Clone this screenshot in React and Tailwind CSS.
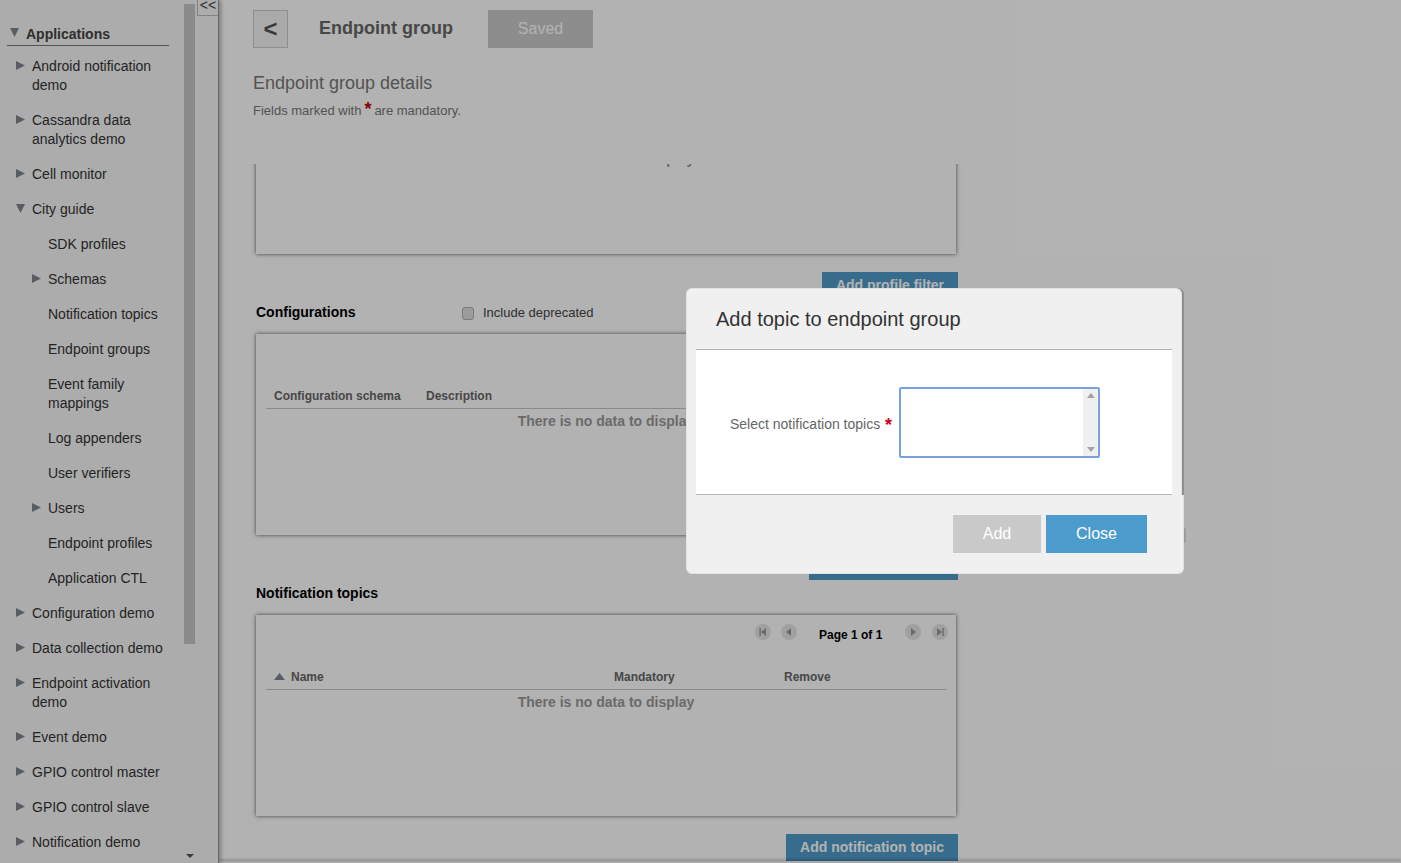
const items = [
  { t: "Android notification demo", l: 1, a: "r" },
  { t: "Cassandra data analytics demo", l: 1, a: "r" },
  { t: "Cell monitor", l: 1, a: "r" },
  { t: "City guide", l: 1, a: "d" },
  { t: "SDK profiles", l: 2 },
  { t: "Schemas", l: 2, a: "r" },
  { t: "Notification topics", l: 2 },
  { t: "Endpoint groups", l: 2 },
  { t: "Event family mappings", l: 2 },
  { t: "Log appenders", l: 2 },
  { t: "User verifiers", l: 2 },
  { t: "Users", l: 2, a: "r" },
  { t: "Endpoint profiles", l: 2 },
  { t: "Application CTL", l: 2 },
  { t: "Configuration demo", l: 1, a: "r" },
  { t: "Data collection demo", l: 1, a: "r" },
  { t: "Endpoint activation demo", l: 1, a: "r" },
  { t: "Event demo", l: 1, a: "r" },
  { t: "GPIO control master", l: 1, a: "r" },
  { t: "GPIO control slave", l: 1, a: "r" },
  { t: "Notification demo", l: 1, a: "r" },
];

function Tri({ dir, className }) {
  return (
    <svg viewBox="0 0 9 9" className={"block h-[9px] w-[9px] " + (className || "")} fill="#7f858e">
      {dir === "d" ? <path d="M0 0H9L4.5 9Z" /> : <path d="M0 0L9 4.5L0 9Z" />}
    </svg>
  );
}

function Row({ item }) {
  return (
    <div className={"flex pb-4 pr-2 text-[14px] leading-[19px] text-[#333] " + (item.l === 2 ? "pl-[32px]" : "pl-4")}>
      <div className="w-4 shrink-0 pt-[2px]">{item.a && <Tri dir={item.a} className="mt-[2px]" />}</div>
      <div>{item.t}</div>
    </div>
  );
}

function Sidebar() {
  return (
    <aside className="relative z-10 flex h-full w-[219px] shrink-0 overflow-hidden border-r border-[#999] bg-[#f7f7f7] shadow-[2px_0_4px_rgba(0,0,0,0.3)]">
      <div className="w-[184px] shrink-0">
        <div className="ml-[7px] mt-[24px] flex h-[22px] w-[162px] border-b border-[#777] text-[14px] font-bold leading-[19px] text-[#444]">
          <Tri dir="d" className="ml-[3px] mt-[4px]" />
          <span className="ml-[7px] mt-[1px]">Applications</span>
        </div>
        <div className="mt-[11px]">
          {items.map((it) => (
            <Row key={it.t} item={it} />
          ))}
        </div>
      </div>
      <div className="relative w-3 shrink-0">
        <div className="mt-1 h-[640px] w-[11px] bg-[#c6c6c6]" />
        <svg viewBox="0 0 8 4" className="absolute bottom-[5px] left-[2px] h-1 w-2" fill="#555">
          <path d="M0 0H8L4 4Z" />
        </svg>
      </div>
      <div className="flex-1">
        <div className="ml-[1px] flex h-4 items-center justify-center border-b border-l border-[#bbb] text-[14px] leading-none text-[#444]">
          <span className="-mt-[5px]">&lt;&lt;</span>
        </div>
      </div>
    </aside>
  );
}

function Pager() {
  const Btn = ({ d, bar, right }) => (
    <div className="flex h-4 w-4 items-center justify-center rounded-full bg-[#e6e6e6]">
      <svg viewBox="0 0 8 8" className="h-2 w-2" fill="#999">
        <path d={d} />
        {bar && <rect x={right ? 6.4 : 0.4} y="0" width="1.4" height="8" />}
      </svg>
    </div>
  );
  return (
    <div className="flex justify-end pr-[8px] pt-[9px]">
      <div className="flex items-start">
        <Btn d="M7 0V8L2 4Z" bar />
        <div className="w-[10px]" />
        <Btn d="M6 0V8L1 4Z" />
        <div className="w-[22px] whitespace-nowrap" />
        <div className="mt-[3px] w-[86px] text-[12px] font-bold leading-4 text-black">Page 1 of 1</div>
        <Btn d="M2 0V8L7 4Z" />
        <div className="w-[11px]" />
        <Btn d="M1 0V8L6 4Z" bar right />
      </div>
    </div>
  );
}

function Box({ cols, className, top }) {
  return (
    <div className={"w-[700px] bg-white px-[10px] shadow-[0_0_4px_rgba(0,0,0,0.65)] " + (className || "")}>
      <div className="-mx-[10px] h-[46px]">{top}</div>
      <div className="relative flex h-[29px] items-center border-b border-[#c4c4c4] pt-[3px] text-[12px] font-bold text-[#666]">
        {cols}
      </div>
      <div className="pt-[3px] text-center text-[14px] font-bold leading-[19px] text-[#999]">There is no data to display</div>
    </div>
  );
}

function Blue({ children, w }) {
  return (
    <div className="flex justify-end">
      <div className={"mt-[18px] flex h-[27px] items-center justify-center bg-[#4f9bcb] text-[14px] font-bold text-white " + w}>
        {children}
      </div>
    </div>
  );
}

function Main() {
  return (
    <main className="flex h-full min-w-0 flex-1 flex-col bg-white">
      <header className="h-[164px] shrink-0 pl-[34px] pt-[10px]">
        <div className="flex h-[38px] items-center">
          <div className="flex h-full w-[35px] items-center justify-center border border-[#ccc] bg-[#f4f4f4] text-[24px] font-bold text-[#555]">
            &lt;
          </div>
          <div className="ml-[31px] -mt-[1px] w-[169px] text-[18px] font-bold text-[#666]">Endpoint group</div>
          <div className="flex h-full w-[105px] items-center justify-center bg-[#cbcbcb] text-[16px] text-white">Saved</div>
        </div>
        <div className="mt-[24px] text-[18px] leading-[22px] text-[#777]">Endpoint group details</div>
        <div className="mt-[7px] flex items-center text-[13px] leading-[19px] text-[#777]">
          Fields marked with
          <span className="ml-[3px] mr-[3px] -mt-[3px] text-[18px] font-bold leading-[19px] text-[#c40000]">*</span>
          are mandatory.
        </div>
      </header>
      <div className="min-h-0 flex-1 overflow-hidden pl-[37px]">
        <div className="w-[702px]">
          <Box className="-mt-[92px] h-[182px]" cols={<span className="ml-2" />} />
          <Blue w="w-[136px]">Add profile filter</Blue>
          <div className="flex h-[35px] pt-[4px]">
            <div className="w-[206px] text-[14px] font-bold leading-[19px] text-black">Configurations</div>
            <div className="mt-[4px] h-[13px] w-3 rounded-[3px] border border-[#aeaeae] bg-[#e0e0e0]" />
            <div className="ml-[9px] text-[13px] leading-[19px] text-[#444]">Include deprecated</div>
          </div>
          <Box
            className="h-[201px]"
            cols={
              <>
                <span className="ml-2 w-[152px]">Configuration schema</span>
                <span>Description</span>
              </>
            }
          />
          <Blue w="w-[149px]">Add configuration</Blue>
          <div className="h-[35px] pt-[4px] text-[14px] font-bold leading-[19px] text-black">Notification topics</div>
          <Box
            className="h-[201px]"
            top={<Pager />}
            cols={
              <>
                <svg viewBox="0 0 11 7" className="ml-2 h-[7px] w-[11px]" fill="#7f858e">
                  <path d="M0 7L5.5 0L11 7Z" />
                </svg>
                <span className="ml-[6px] w-[323px]">Name</span>
                <span className="w-[170px]">Mandatory</span>
                <span>Remove</span>
              </>
            }
          />
          <Blue w="w-[172px]">Add notification topic</Blue>
        </div>
      </div>
      <div className="h-[2px] shrink-0 bg-[#f2f2f2] shadow-[0_-1px_3px_rgba(0,0,0,0.35)]" />
    </main>
  );
}

function Modal() {
  return (
    <div className="absolute left-[686px] top-[288px] w-[498px] text-[#333]">
      <div className="absolute left-[498px] top-[240px] h-[15px] w-[2px] rounded-r-[2px] bg-[#9c9c9c]" />
      <div className="w-[496px] rounded-t-[6px] border border-b-0 border-[#e2e2e2] bg-[#f0f0f0] px-[9px] shadow-[2px_0_0_#8f8f8f]">
        <div className="flex h-[61px] items-center border-b border-[#b5b5b5] pl-[20px] text-[20px] text-[#333]">
          Add topic to endpoint group
        </div>
        <div className="flex h-[145px] items-start border-b border-[#b5b5b5] bg-white pl-[34px] pt-[37px]">
          <div className="mt-[27px] w-[155px] whitespace-nowrap text-[14px] leading-5 text-[#666]">Select notification topics</div>
          <div className="mt-[28px] w-[14px] text-[18px] font-bold leading-5 text-[#d0021b]">*</div>
          <div className="flex h-[71px] w-[201px] justify-end rounded-[2px] border-2 border-[#7ba0e0] bg-white">
            <div className="flex w-[15px] flex-col items-center justify-between bg-[#f0f0f0] py-[4px]">
              <svg viewBox="0 0 8 5" className="h-[5px] w-2" fill="#a3a3a3"><path d="M0 5L4 0L8 5Z" /></svg>
              <svg viewBox="0 0 8 5" className="h-[5px] w-2" fill="#a3a3a3"><path d="M0 0H8L4 5Z" /></svg>
            </div>
          </div>
        </div>
      </div>
      <div className="flex h-[79px] w-[498px] items-start justify-end gap-[5px] rounded-b-[6px] border border-t-0 border-[#e2e2e2] bg-[#f0f0f0] pr-[36px] pt-[20px]">
        <div className="flex h-[38px] w-[88px] items-center justify-center bg-[#c9c9c9] text-[16px] text-white">Add</div>
        <div className="flex h-[38px] w-[101px] items-center justify-center bg-[#4b9bcc] text-[16px] text-white">Close</div>
      </div>
    </div>
  );
}

export default function App() {
  return (
    <div className="relative flex h-screen w-full overflow-hidden bg-white font-['Liberation_Sans',Arial,sans-serif]">
      <Sidebar />
      <Main />
      <div className="absolute inset-0 z-20 bg-black/30" />
      <div className="absolute inset-0 z-30">
        <Modal />
      </div>
    </div>
  );
}
